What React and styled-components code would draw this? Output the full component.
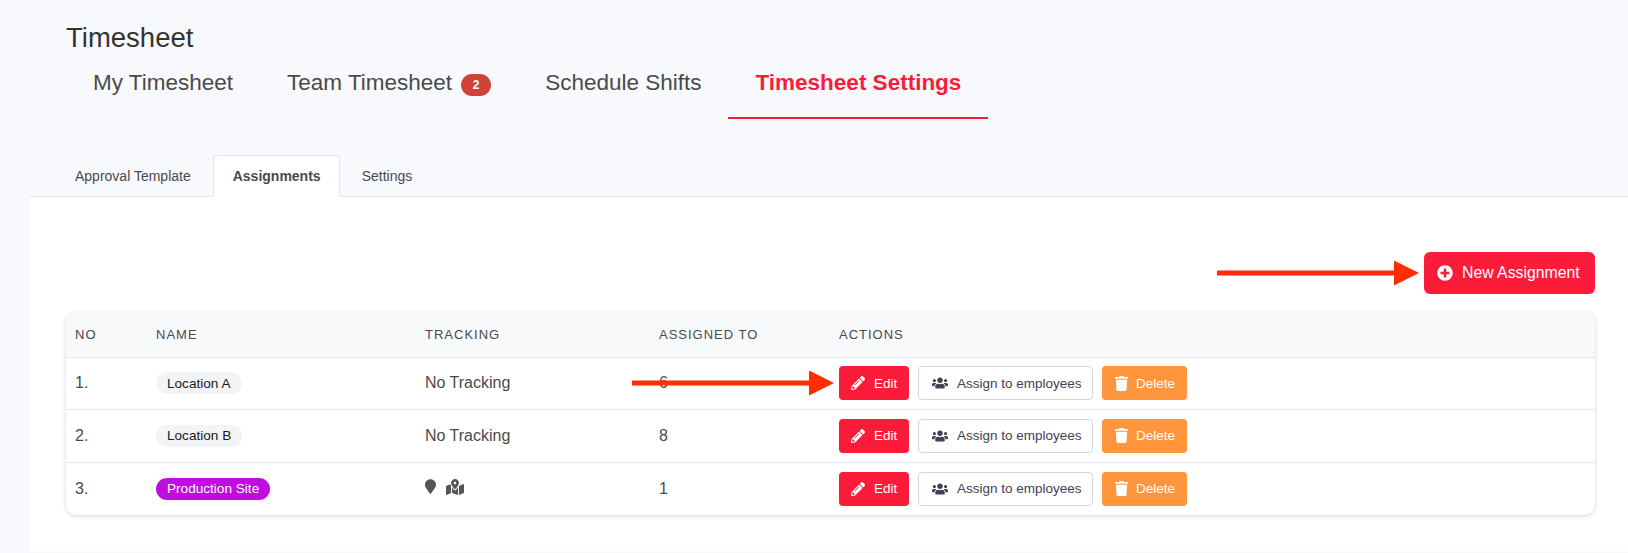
import styled, { createGlobalStyle } from "styled-components";
import {
  FaPlusCircle,
  FaPencilAlt,
  FaUsers,
  FaTrash,
  FaMapMarker,
  FaMapMarkedAlt,
} from "react-icons/fa";

const ASSIGNMENTS = [
  { no: "1.", name: "Location A", tracking: "No Tracking", count: "6", arrow: true },
  { no: "2.", name: "Location B", tracking: "No Tracking", count: "8" },
  { no: "3.", name: "Production Site", color: "#c00cdf", count: "1" },
];

const Arrow = ({ width, className }) => (
  <ArrowBox className={className} $width={width}>
    <svg width={width} height="25" viewBox={`0 0 ${width} 25`}>
      <rect x="0" y="10" width={width - 20} height="5" fill="#ff2d00" />
      <path d={`M${width - 25} 0 L${width} 12.5 L${width - 25} 25 Z`} fill="#ff2d00" />
    </svg>
  </ArrowBox>
);

const App = () => {
  return (
    <>
      <GlobalStyle />
      <Page>
        <Title>Timesheet</Title>
        <MainTabs>
          <MainTab>My Timesheet</MainTab>
          <MainTab>
            Team Timesheet <Badge>2</Badge>
          </MainTab>
          <MainTab>Schedule Shifts</MainTab>
          <MainTab $active>Timesheet Settings</MainTab>
        </MainTabs>
        <SubTabs>
          <SubTab>Approval Template</SubTab>
          <SubTab $active>Assignments</SubTab>
          <SubTab>Settings</SubTab>
        </SubTabs>
        <Card>
          <Toolbar>
            <NewButton>
              <ButtonArrow width={202} />
              <FaPlusCircle />
              New Assignment
            </NewButton>
          </Toolbar>
          <TableWrap>
            <Table>
              <thead>
                <tr>
                  <Th $width={81}>No</Th>
                  <Th $width={269}>Name</Th>
                  <Th $width={234}>Tracking</Th>
                  <Th $width={180}>Assigned to</Th>
                  <Th>Actions</Th>
                </tr>
              </thead>
              <tbody>
                {ASSIGNMENTS.map(({ no, name, color, tracking, count, arrow }) => (
                  <Row key={no}>
                    <Td>{no}</Td>
                    <Td>
                      <Pill $color={color}>{name}</Pill>
                    </Td>
                    <Td>
                      {tracking || (
                        <TrackIcons>
                          <PinIcon />
                          <MapIcon />
                        </TrackIcons>
                      )}
                    </Td>
                    <Td>{count}</Td>
                    <Td>
                      <Actions>
                        <EditButton>
                          {arrow && <ButtonArrow width={202} />}
                          <FaPencilAlt />
                          Edit
                        </EditButton>
                        <AssignButton>
                          <FaUsers />
                          Assign to employees
                        </AssignButton>
                        <DeleteButton>
                          <FaTrash />
                          Delete
                        </DeleteButton>
                      </Actions>
                    </Td>
                  </Row>
                ))}
              </tbody>
            </Table>
          </TableWrap>
        </Card>
      </Page>
    </>
  );
};

export default App;

const GlobalStyle = createGlobalStyle`
  html, body {
    margin: 0;
    background: #f8f9fd;
  }
  * {
    box-sizing: border-box;
  }
  body {
    font-family: "Liberation Sans", Arial, sans-serif;
    overflow: hidden;
  }
`;

const Page = styled.div`
  height: 553px;
  padding-top: 22px;
`;

const Title = styled.h1`
  margin: 0 0 0 66px;
  font-size: 27.5px;
  line-height: 32px;
  font-weight: 400;
  color: #333;
`;

const MainTabs = styled.div`
  display: flex;
  margin-left: 66px;
  height: 65px;
`;

const MainTab = styled.div`
  display: flex;
  align-items: center;
  gap: 9px;
  height: 65px;
  padding: 0 27px 5px;
  font-size: 22.5px;
  font-weight: ${(p) => (p.$active ? 700 : 400)};
  color: ${(p) => (p.$active ? "#fb1c3a" : "#4a4a4a")};
  border-bottom: 2px solid ${(p) => (p.$active ? "#fb1c3a" : "transparent")};
`;

const Badge = styled.span`
  display: inline-flex;
  align-items: center;
  justify-content: center;
  width: 30px;
  height: 22px;
  margin-top: 4px;
  border-radius: 11px;
  background: #cf4238;
  color: #fff;
  font-size: 12px;
  font-weight: 700;
`;

const SubTabs = styled.div`
  display: flex;
  height: 42px;
  margin: 36px 0 0 30px;
  padding-left: 25px;
  border-bottom: 1px solid #e4e6ef;
`;

const SubTab = styled.div`
  display: flex;
  align-items: center;
  height: 42px;
  padding: ${(p) => (p.$active ? "0 18px 2px 19px" : "0 19px 2px")};
  margin: ${(p) => (p.$active ? "0 2px" : "0")};
  font-size: 14px;
  font-weight: ${(p) => (p.$active ? 700 : 400)};
  color: #4a4a4a;
  background: ${(p) => (p.$active ? "#fff" : "transparent")};
  border: 1px solid ${(p) => (p.$active ? "#e4e6ef" : "transparent")};
  border-bottom: none;
  border-radius: 4px 4px 0 0;
`;

const Card = styled.div`
  margin-left: 30px;
  height: 354px;
  background: #fff;
  padding: 55px 33px 0 36px;
`;

const Toolbar = styled.div`
  display: flex;
  justify-content: flex-end;
  height: 60px;
`;

const BaseButton = styled.button`
  position: relative;
  display: inline-flex;
  align-items: center;
  height: 34px;
  border: 1px solid transparent;
  border-radius: 4px;
  font-family: inherit;
  font-size: 13.5px;
  padding: 0;
  color: #fff;
  svg {
    flex: none;
  }
`;

const NewButton = styled(BaseButton)`
  width: 171px;
  height: 42px;
  padding-left: 12px;
  gap: 9px;
  font-size: 15.8px;
  background: #fb1c3a;
  border-radius: 6px;
  svg {
    font-size: 16px;
  }
`;

const EditButton = styled(BaseButton)`
  width: 70px;
  padding-left: 11px;
  gap: 9px;
  background: #fb1c3a;
  svg {
    font-size: 14px;
  }
`;

const AssignButton = styled(BaseButton)`
  width: 175px;
  padding-left: 13px;
  gap: 9px;
  color: #3f4254;
  background: #fff;
  border-color: #d2d4de;
  svg {
    font-size: 16px;
  }
`;

const DeleteButton = styled(BaseButton)`
  width: 85px;
  padding-left: 11px;
  gap: 7px;
  background: #ff963d;
  svg {
    font-size: 15px;
  }
`;

const ArrowBox = styled.span`
  position: absolute;
  display: block;
  line-height: 0;
  width: ${(p) => p.$width}px;
  height: 25px;
  top: 50%;
  transform: translateY(-50%);
`;

const ButtonArrow = styled(Arrow)`
  right: 100%;
  margin-right: 6px;
`;

const TableWrap = styled.div`
  border-radius: 10px;
  background: #fff;
  box-shadow: 0 1px 4px rgba(40, 45, 70, 0.2);
  overflow: hidden;
`;

const Table = styled.table`
  width: 100%;
  border-collapse: collapse;
  table-layout: fixed;
`;

const Th = styled.th`
  width: ${(p) => (p.$width ? `${p.$width}px` : "auto")};
  height: 45px;
  padding: 0 0 0 9px;
  background: #f8f9fb;
  border-bottom: 1px solid #e4e6ef;
  text-align: left;
  text-transform: uppercase;
  font-size: 13px;
  font-weight: 400;
  letter-spacing: 1px;
  color: #4a4a4a;
`;

const Row = styled.tr`
  height: 52.5px;
  border-bottom: 1px solid #e4e6ef;
  &:last-child {
    border-bottom: none;
  }
`;

const Td = styled.td`
  padding: 0 0 0 9px;
  font-size: 16px;
  color: #4a4a4a;
`;

const Pill = styled.span`
  display: inline-flex;
  align-items: center;
  height: 22px;
  padding: 0 11px;
  border-radius: 11px;
  font-size: 13.6px;
  background: ${(p) => p.$color || "#f3f4f6"};
  color: ${(p) => (p.$color ? "#fff" : "#1a1a1a")};
`;

const TrackIcons = styled.span`
  display: inline-flex;
  align-items: center;
  gap: 10px;
  color: #555;
`;

const PinIcon = styled(FaMapMarker)`
  width: 11px;
  height: 15px;
`;

const MapIcon = styled(FaMapMarkedAlt)`
  width: 18px;
  height: 16px;
`;

const Actions = styled.div`
  display: flex;
  gap: 9px;
`;
